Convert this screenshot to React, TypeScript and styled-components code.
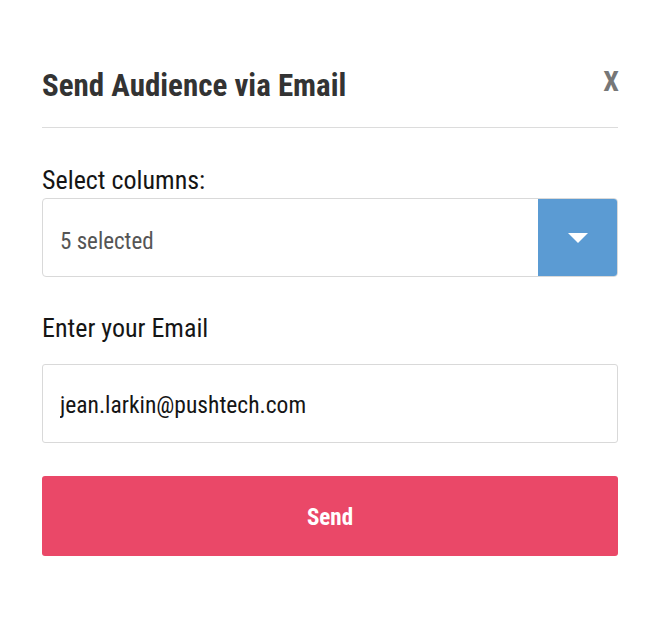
import React, { useState } from 'react';
import styled, { createGlobalStyle } from 'styled-components';

const GlobalStyle = createGlobalStyle`
  html, body {
    margin: 0;
    padding: 0;
    background: #ffffff;
  }
  body {
    font-family: 'Roboto Condensed', Roboto, 'Liberation Sans', sans-serif;
    font-stretch: condensed;
  }
  * {
    box-sizing: border-box;
  }
`;

export default function App(): JSX.Element {
  const [email, setEmail] = useState('jean.larkin@pushtech.com');

  return (
    <>
      <GlobalStyle />
      <MODAL>
        <HEADER>
          <TITLE>Send Audience via Email</TITLE>
          <CLOSE type="button">X</CLOSE>
        </HEADER>

        <FIELD $gap={3} $space={36}>
          <LABEL>Select columns:</LABEL>
          <SELECT_BOX>
            <SELECT_VALUE>5 selected</SELECT_VALUE>
            <CARET_BUTTON type="button">
              <CARET />
            </CARET_BUTTON>
          </SELECT_BOX>
        </FIELD>

        <FIELD $gap={21} $space={33}>
          <LABEL>Enter your Email</LABEL>
          <INPUT value={email} onChange={(e) => setEmail(e.target.value)} />
        </FIELD>

        <SEND_BUTTON type="button">Send</SEND_BUTTON>
      </MODAL>
    </>
  );
}

const MODAL = styled.div`
  width: 662px;
  padding: 68px 44px 66px 42px;
  display: flex;
  flex-direction: column;
`;

const HEADER = styled.div`
  display: flex;
  align-items: flex-start;
  justify-content: space-between;
  padding-bottom: 23px;
  border-bottom: 1px solid #dcdcdc;
  margin-bottom: 37px;
`;

const TITLE = styled.h2`
  margin: 0;
  font-size: 31px;
  line-height: 36px;
  font-weight: 700;
  color: #333333;
`;

const CLOSE = styled.button`
  border: none;
  background: none;
  padding: 0;
  margin-right: -1px;
  font-family: inherit;
  font-stretch: condensed;
  font-size: 28px;
  line-height: 28px;
  font-weight: 700;
  color: #777777;
  cursor: pointer;
`;

const FIELD = styled.div<{ $gap: number; $space: number }>`
  display: flex;
  flex-direction: column;
  gap: ${({ $gap }) => $gap}px;
  margin-bottom: ${({ $space }) => $space}px;
`;

const LABEL = styled.label`
  font-size: 26px;
  line-height: 30px;
  color: #151515;
`;

const SELECT_BOX = styled.div`
  display: flex;
  height: 79px;
  border: 1px solid #d9d9d9;
  border-radius: 4px;
  overflow: hidden;
`;

const SELECT_VALUE = styled.div`
  flex: 1;
  display: flex;
  align-items: center;
  padding: 7px 0 0 17px;
  font-size: 23px;
  color: #555555;
`;

const CARET_BUTTON = styled.button`
  width: 80px;
  margin: -1px -1px -1px 0;
  border: none;
  background: #5b9bd3;
  display: flex;
  align-items: center;
  justify-content: center;
  cursor: pointer;
`;

const CARET = styled.span`
  width: 0;
  height: 0;
  border-left: 10px solid transparent;
  border-right: 10px solid transparent;
  border-top: 10px solid #ffffff;
`;

const INPUT = styled.input`
  height: 79px;
  border: 1px solid #d9d9d9;
  border-radius: 3px;
  padding: 3px 17px 0 17px;
  font-family: inherit;
  font-stretch: condensed;
  font-size: 23.5px;
  color: #151515;
  outline: none;
`;

const SEND_BUTTON = styled.button`
  height: 80px;
  border: none;
  border-radius: 3px;
  padding: 2px 0 0 0;
  background: #ea4868;
  color: #ffffff;
  font-family: inherit;
  font-stretch: condensed;
  font-size: 23px;
  font-weight: 700;
  cursor: pointer;
`;
